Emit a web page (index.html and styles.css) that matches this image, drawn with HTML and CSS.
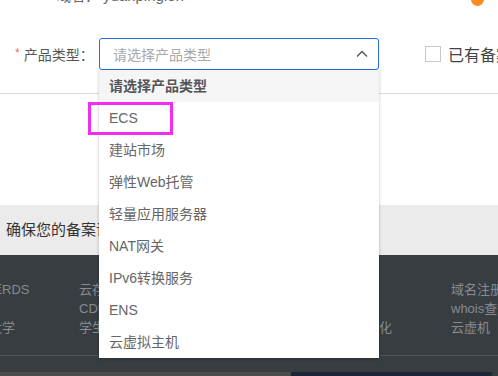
FILE: index.html
```html
<!DOCTYPE html>
<html>
  <head>
    <meta charset="utf-8">
    <meta name="viewport" content="width=device-width, initial-scale=1">
    <link rel="stylesheet" href="styles.css">
    <title>备案信息</title>
  </head>
  <body>
    <div class="form">
      <div class="info-row">
        <span class="info-label">域名：</span>
        <span class="info-value">yuanpinglen</span>
        <span class="dot"></span>
      </div>
      <div class="form-row">
        <label class="form-label"><span class="req">*</span>产品类型：</label>
        <div class="select">
          <span class="placeholder">请选择产品类型</span>
          <svg class="chevron" width="12" height="8" viewBox="0 0 12 8"><path d="M1 6.5 L6 1.5 L11 6.5" fill="none" stroke="#555" stroke-width="1.4"/></svg>
        </div>
        <span class="check"><span class="box"></span>已有备案</span>
      </div>
    </div>

    <div class="notice">确保您的备案语言与您的实际情况一致</div>

    <div class="footer">
      <div class="links">
        <ul class="col col-1">
          <li>云数据库RDS</li>
          <li></li>
          <li>阿里云大学</li>
        </ul>
        <ul class="col col-2">
          <li>云存储OSS</li>
          <li>CDN</li>
          <li>学生专享</li>
        </ul>
        <ul class="col col-3">
          <li>云安全</li>
          <li>物联网</li>
          <li>企业数字化</li>
        </ul>
        <ul class="col col-4">
          <li>域名注册</li>
          <li>whois查询</li>
          <li>云虚机</li>
        </ul>
      </div>
      <div class="footer-bottom">
        <span class="strip-a"></span>
        <span class="strip-b"></span>
      </div>
    </div>

    <ul class="dropdown">
      <li class="opt opt-head">请选择产品类型</li>
      <li class="opt">ECS</li>
      <li class="opt">建站市场</li>
      <li class="opt">弹性Web托管</li>
      <li class="opt">轻量应用服务器</li>
      <li class="opt">NAT网关</li>
      <li class="opt">IPv6转换服务</li>
      <li class="opt">ENS</li>
      <li class="opt">云虚拟主机</li>
    </ul>
    <div class="highlight"></div>
  </body>
</html>
```

FILE: styles.css
```css
html, body {
    margin: 0; width: 498px; height: 376px; overflow: hidden;
}
body {
    position: relative;
    font-family: "Liberation Sans", "Noto Sans CJK SC", sans-serif;
    font-size: 14px; color: #333;
}
ul { margin: 0; padding: 0; list-style: none; }

.form { display: flow-root; height: 93px; border-bottom: 1px solid #dcdcdc; }
.info-row {
    display: flex; height: 20px; line-height: 20px;
    margin-top: -14px; color: #666;
}
.info-label { margin-left: 57px; width: 46px; }
.info-value { font-size: 15px; }
.dot {
    width: 13px; height: 13px; border-radius: 50%; background: #ff8c1f;
    margin-left: auto; margin-right: 14px; margin-top: 7px;
}

.form-row {
    display: flex; align-items: center; margin-top: 32px; height: 32px;
}
.form-label {
    flex: none; width: 84px; padding-left: 15px; color: #555; font-size: 14px;
}
.req { color: #f56c6c; font-size: 12px; margin-right: 4px; vertical-align: 3px; }
.select {
    flex: none; box-sizing: border-box; width: 280px; height: 32px;
    border: 1px solid #1f6fd6; border-radius: 3px;
    display: flex; align-items: center; padding: 0 10px 0 13px;
}
.placeholder { color: #a8a8a8; flex: 1; }
.check {
    flex: none; display: flex; align-items: center; margin-left: 46px;
    font-size: 16px; color: #444; white-space: nowrap;
}
.box {
    width: 14px; height: 14px; border: 1px solid #c8c8c8; margin-right: 7px;
}

.notice {
    margin-top: 111px; height: 50px; line-height: 50px; white-space: nowrap;
    background: #ebebeb; padding-left: 6px; font-size: 15px; color: #333;
}

.footer { background: #373d41; height: 121px; }
.links {
    display: flex; padding-top: 25px; margin-left: -50px; height: 57px;
    border-bottom: 1px solid #4b5257; margin-bottom: 16px;
    padding-bottom: 18px;
}
.col { flex: none; }
.col li { height: 19px; line-height: 19px; font-size: 13px; color: #868c91; white-space: nowrap; }
.col-1 { width: 129px; }
.col-2 { width: 248px; }
.col-3 { width: 124px; }
.footer-bottom { display: flex; height: 4px; }
.strip-a { width: 291px; background: #4a4b4c; }
.strip-b { width: 201px; background: #1c2638; }

.dropdown {
    position: absolute; left: 99px; top: 70px; width: 280px;
    background: #fff; box-shadow: 0 1px 3px rgba(0, 0, 0, 0.25);
}
.opt {
    height: 32px; line-height: 32px; padding-left: 10px;
    font-size: 14px; color: #666;
}
.opt-head { background: #f5f5f5; color: #555; font-weight: bold; }

.highlight {
    position: absolute; left: 88px; top: 102px; width: 79px; height: 27px;
    border: 3px solid #f22cf0;
}
```
